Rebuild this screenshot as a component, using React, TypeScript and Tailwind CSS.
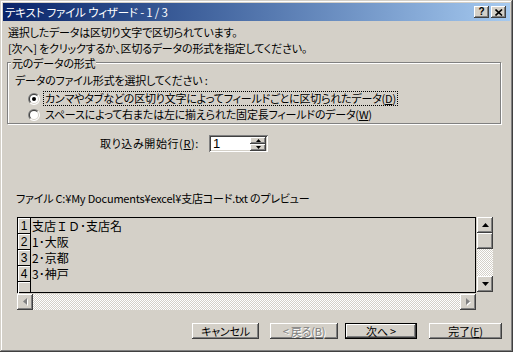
import type { ReactNode } from 'react'

const jp = "font-['Noto_Sans_CJK_JP',sans-serif] [font-feature-settings:'palt'] tracking-[-0.2px]"
const mono = "font-['Noto_Sans_CJK_JP',monospace]"
const raised =
  'bg-[#d4d0c8] shadow-[inset_-1px_-1px_#404040,inset_1px_1px_#ffffff,inset_-2px_-2px_#808080,inset_2px_2px_#d4d0c8]'
const sunken =
  'shadow-[inset_1px_1px_#808080,inset_-1px_-1px_#ffffff,inset_2px_2px_#404040,inset_-2px_-2px_#d4d0c8]'
const checker =
  'bg-[image:repeating-conic-gradient(#ffffff_0%_25%,#d4d0c8_0%_50%)] bg-[length:2px_2px]'

function Arrow({ dir, disabled }: { dir: 'up' | 'down' | 'left' | 'right'; disabled?: boolean }) {
  const fill = disabled ? '#808080' : '#000000'
  if (dir === 'up' || dir === 'down') {
    const pts = dir === 'up' ? '3.5,0 7,4 0,4' : '0,0 7,0 3.5,4'
    return (
      <svg width="7" height="4" viewBox="0 0 7 4">
        <polygon points={pts} fill={fill} />
      </svg>
    )
  }
  const pts = dir === 'left' ? '4,0 4,7 0,3.5' : '0,0 4,3.5 0,7'
  return (
    <svg width="5" height="8" viewBox="0 0 5 8">
      {disabled && <polygon points={pts} fill="#ffffff" transform="translate(1,1)" />}
      <polygon points={pts} fill={fill} />
    </svg>
  )
}

function ScrollBtn({ dir, disabled }: { dir: 'up' | 'down' | 'left' | 'right'; disabled?: boolean }) {
  return (
    <div className={`${raised} flex h-[16px] w-[16px] shrink-0 items-center justify-center`}>
      <Arrow dir={dir} disabled={disabled} />
    </div>
  )
}

function Radio({ checked }: { checked?: boolean }) {
  return (
    <svg width="12" height="12" viewBox="0 0 12 12" className="shrink-0">
      <path d="M1.757 10.243 A6 6 0 0 1 10.243 1.757 Z" fill="#808080" />
      <path d="M10.243 1.757 A6 6 0 0 1 1.757 10.243 Z" fill="#ffffff" />
      <path d="M2.464 9.536 A5 5 0 0 1 9.536 2.464 Z" fill="#404040" />
      <path d="M9.536 2.464 A5 5 0 0 1 2.464 9.536 Z" fill="#d4d0c8" />
      <circle cx="6" cy="6" r="4" fill="#ffffff" />
      {checked && <circle cx="6" cy="6" r="2" fill="#000000" />}
    </svg>
  )
}

function TitleBtn({ children, className = '' }: { children: ReactNode; className?: string }) {
  return (
    <div className={`${raised} flex h-[12px] w-[15px] items-center justify-center ${className}`}>
      {children}
    </div>
  )
}

function Btn({
  children,
  width,
  isDefault,
  disabled,
}: {
  children: ReactNode
  width: string
  isDefault?: boolean
  disabled?: boolean
}) {
  const text = disabled ? 'text-[#808080] [text-shadow:1px_1px_0_#ffffff]' : 'text-black'
  return (
    <div className={`${width} h-[16px] shrink-0 ${isDefault ? 'border border-black' : ''}`}>
      <div className={`${raised} ${jp} ${text} flex h-full w-full items-center justify-center text-[11px] leading-none`}>
        {children}
      </div>
    </div>
  )
}

const previewRows = ['支店ＩＤ･支店名', '1･大阪', '2･京都', '3･神戸']

export default function App() {
  return (
    <div className="flex h-[352px] w-[513px] flex-col overflow-hidden bg-[#d4d0c8] p-[3px] text-black shadow-[inset_-1px_-1px_#404040,inset_1px_1px_#d4d0c8,inset_-2px_-2px_#808080,inset_2px_2px_#ffffff]">
      {/* title bar */}
      <div className="flex h-[18px] shrink-0 items-center bg-linear-to-r from-[#0a246a] to-[#a6caf0] pl-[2px] pr-[4px]">
        <span className={`${jp} flex-1 text-[11.5px] leading-[18px] text-white`}>
          テキスト ファイル ウィザード - 1 / 3
        </span>
        <TitleBtn>
          <span className="font-['Liberation_Sans',sans-serif] text-[10px] font-bold leading-none">?</span>
        </TitleBtn>
        <TitleBtn className="ml-[2px]">
          <svg width="8" height="7" viewBox="0 0 8 7">
            <path d="M0.5 0.5 L7 6.5 M7 0.5 L0.5 6.5" stroke="#000" strokeWidth="1.6" />
          </svg>
        </TitleBtn>
      </div>

      <div className={`${jp} pl-[5px] pt-[3px] text-[11px] leading-[16px]`}>
        <p>選択したデータは区切り文字で区切られています。</p>
        <p>[次へ] をクリックするか、区切るデータの形式を指定してください。</p>
      </div>

      {/* group box */}
      <div className={`${jp} ml-[4px] mt-[6px] flex w-[494px] flex-col border border-[#808080] text-[11px] leading-[15px] shadow-[inset_1px_1px_0_#ffffff,1px_1px_0_#ffffff]`}>
        <span className="-mt-[7px] ml-[3px] h-[14px] self-start bg-[#d4d0c8] px-[1px] leading-[14px]">元のデータの形式</span>
        <p className="ml-[7px] mt-[3px] h-[15px]">データのファイル形式を選択してください :</p>
        <div className="ml-[20px] mt-[3px] flex h-[15px] items-center gap-[3px]">
          <Radio checked />
          <span className="h-[15px] border border-dotted border-black px-[1px] leading-[13px]">
            カンマやタブなどの区切り文字によってフィールドごとに区切られたデータ(<u>D</u>)
          </span>
        </div>
        <div className="mb-[1px] ml-[20px] mt-[1px] flex h-[15px] items-center gap-[4px]">
          <Radio />
          <span className="px-[1px]">
            スペースによって右または左に揃えられた固定長フィールドのデータ(<u>W</u>)
          </span>
        </div>
      </div>

      {/* start row */}
      <div className={`${jp} mt-[11px] flex h-[17px] items-center text-[11px]`}>
        <span className="w-[206px] pl-[97px] leading-[17px] tracking-[0.6px]">
          取り込み開始行(<u>R</u>):
        </span>
        <div className={`${sunken} flex h-[17px] w-[59px] items-center bg-white pl-[4px] pr-[2px]`}>
          <span className="flex-1 font-['Liberation_Sans',sans-serif] text-[13px] leading-none">1</span>
          <div className="flex w-[16px] flex-col">
            <div className={`${raised} flex h-[7px] items-center justify-center`}>
              <svg width="5" height="3" viewBox="0 0 5 3">
                <polygon points="2.5,0 5,3 0,3" fill="#000" />
              </svg>
            </div>
            <div className={`${raised} flex h-[7px] items-center justify-center`}>
              <svg width="5" height="3" viewBox="0 0 5 3">
                <polygon points="0,0 5,0 2.5,3" fill="#000" />
              </svg>
            </div>
          </div>
        </div>
      </div>

      <p className={`${jp} ml-[13px] mt-[39px] h-[15px] text-[11px] leading-[15px]`}>
        ファイル C:¥My Documents¥excel¥支店コード.txt のプレビュー
      </p>

      {/* preview */}
      <div className="ml-[14px] mt-[11px] flex items-start">
        <div className="flex h-[76px] w-[459px] border border-black">
          <div className="flex w-[13px] flex-col border-r border-black">
            {[1, 2, 3, 4, 5].map((n) => (
              <div
                key={n}
                className="flex h-[16px] shrink-0 items-end justify-center border-b border-black font-['Liberation_Sans',sans-serif] text-[12px] leading-[13px] shadow-[inset_1px_1px_0_#ffffff]"
              >
                {n < 5 ? n : ''}
              </div>
            ))}
          </div>
          <div className={`${mono} flex flex-col pl-[1px] text-[12px]`}>
            {previewRows.map((r) => (
              <div key={r} className="h-[16px] leading-[16px]">
                {r}
              </div>
            ))}
          </div>
        </div>
        <div className="ml-[1px] flex h-[75px] w-[16px] flex-col">
          <ScrollBtn dir="up" />
          <div className={`${raised} h-[16px] shrink-0`} />
          <div className={`${checker} flex-1`} />
          <ScrollBtn dir="down" />
        </div>
      </div>
      <div className="ml-[14px] mt-[1px] flex h-[16px] w-[459px]">
        <ScrollBtn dir="left" disabled />
        <div className={`${checker} flex-1`} />
        <ScrollBtn dir="right" disabled />
      </div>

      {/* buttons */}
      <div className="mt-[13px] flex justify-end pr-[8px]">
        <Btn width="w-[67px]">キャンセル</Btn>
        <div className="w-[11px]" />
        <Btn width="w-[68px]" disabled>
          &lt; 戻る(B)
        </Btn>
        <div className="w-[7px]" />
        <Btn width="w-[72px]" isDefault>
          次へ &gt;
        </Btn>
        <div className="w-[12px]" />
        <Btn width="w-[73px]">
          完了(<u>F</u>)
        </Btn>
      </div>
    </div>
  )
}
